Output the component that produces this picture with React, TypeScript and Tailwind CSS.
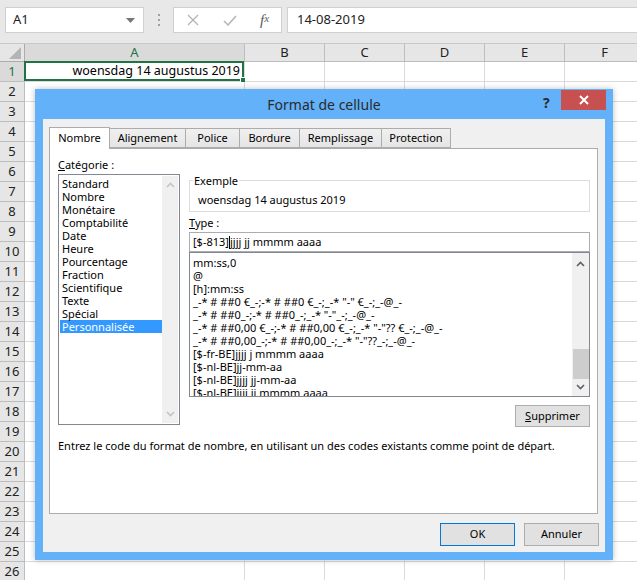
import React from "react";

const cols = [
  { id: "A", w: "w-[220px]" },
  { id: "B", w: "w-[80px]" },
  { id: "C", w: "w-[80px]" },
  { id: "D", w: "w-[80px]" },
  { id: "E", w: "w-[80px]" },
  { id: "F", w: "w-[80px]" },
];

const categories = [
  "Standard",
  "Nombre",
  "Monétaire",
  "Comptabilité",
  "Date",
  "Heure",
  "Pourcentage",
  "Fraction",
  "Scientifique",
  "Texte",
  "Spécial",
  "Personnalisée",
];

const formats = [
  "mm:ss,0",
  "@",
  "[h]:mm:ss",
  '_-* # ##0 €_-;-* # ##0 €_-;_-* "-" €_-;_-@_-',
  '_-* # ##0_-;-* # ##0_-;_-* "-"_-;_-@_-',
  '_-* # ##0,00 €_-;-* # ##0,00 €_-;_-* "-"?? €_-;_-@_-',
  '_-* # ##0,00_-;-* # ##0,00_-;_-* "-"??_-;_-@_-',
  "[$-fr-BE]jjjj j mmmm aaaa",
  "[$-nl-BE]jj-mm-aa",
  "[$-nl-BE]jjjj jj-mm-aa",
  "[$-nl-BE]jjjj jj mmmm aaaa",
];

const tabs = [
  { label: "Nombre", w: "w-[61px]", active: true },
  { label: "Alignement", w: "w-[77px]" },
  { label: "Police", w: "w-[55px]" },
  { label: "Bordure", w: "w-[61px]" },
  { label: "Remplissage", w: "w-[83px]" },
  { label: "Protection", w: "w-[70px]" },
];

const Chevron = ({ down, color }: { down?: boolean; color: string }) => (
  <svg width="9" height="6" viewBox="0 0 9 6">
    <path
      d={down ? "M1 1 L4.5 4.5 L8 1" : "M1 5 L4.5 1.5 L8 5"}
      fill="none"
      stroke={color}
      strokeWidth="1.6"
    />
  </svg>
);

const FormulaBar = () => (
  <div className="h-[43px] bg-[#e8e8e8] flex items-start pt-[7px] pl-[5px]">
    <div className="w-[139px] shrink-0 h-[26px] bg-white border border-[#d0d0d0] flex items-center justify-between pl-[7px] pr-[8px]">
      <span className="text-[13px] text-[#222]">A1</span>
      <svg width="9" height="5" viewBox="0 0 9 5">
        <path d="M0 0 L9 0 L4.5 5 Z" fill="#777" />
      </svg>
    </div>
    <div className="w-[29px] shrink-0 h-[26px] flex flex-col items-center justify-center gap-[3px]">
      <span className="w-[2px] h-[2px] bg-[#a0a0a0]" />
      <span className="w-[2px] h-[2px] bg-[#a0a0a0]" />
      <span className="w-[2px] h-[2px] bg-[#a0a0a0]" />
    </div>
    <div className="w-[109px] shrink-0 h-[26px] bg-white border border-[#d0d0d0] flex items-center">
      <span className="w-[37px] flex justify-center">
        <svg width="12" height="12" viewBox="0 0 12 12">
          <path d="M1 1 L11 11 M11 1 L1 11" stroke="#b4b4b4" strokeWidth="1.3" />
        </svg>
      </span>
      <span className="w-[37px] flex justify-center">
        <svg width="14" height="11" viewBox="0 0 14 11">
          <path d="M1 6 L5 10 L13 1" fill="none" stroke="#b4b4b4" strokeWidth="1.5" />
        </svg>
      </span>
      <span className="w-[33px] flex justify-center font-['Liberation_Serif',serif] italic text-[15px] text-[#5a5a5a] leading-none">
        f<span className="text-[11px]">x</span>
      </span>
    </div>
    <div className="ml-[5px] flex-1 h-[26px] bg-white border border-[#d0d0d0] border-r-0 flex items-center pl-[9px]">
      <span className="text-[13px] text-[#222]">14-08-2019</span>
    </div>
  </div>
);

const Sheet = () => (
  <div>
    <div className="flex h-[19px] border-t border-[#c8c8c8]">
      <div className="w-[25px] shrink-0 h-full bg-[#e6e6e6] border-r border-b border-[#ababab] flex items-end justify-end pr-[3px] pb-[2px]">
        <svg width="12" height="12" viewBox="0 0 12 12">
          <path d="M12 0 L12 12 L0 12 Z" fill="#b4b4b4" />
        </svg>
      </div>
      {cols.map((c) => (
        <div
          key={c.id}
          className={`${c.w} shrink-0 h-full border-r border-b border-[#bdbdbd] flex items-center justify-center text-[13px] ${
            c.id === "A" ? "text-[#217346] bg-[#dadada] border-b-[#ababab]" : "text-[#222] bg-[#e6e6e6]"
          }`}
        >
          {c.id}
        </div>
      ))}
    </div>
    {Array.from({ length: 26 }, (_, i) => i + 1).map((r) => (
      <div key={r} className="flex h-[20px]">
        <div
          className={`w-[25px] shrink-0 h-full border-r border-b border-[#bdbdbd] flex items-center justify-center text-[13px] ${
            r === 1 ? "text-[#217346] bg-[#dadada]" : "text-[#222] bg-[#e6e6e6]"
          }`}
        >
          {r}
        </div>
        {cols.map((c) => (
          <div
            key={c.id}
            className={`${c.w} shrink-0 h-full border-r border-b border-[#dadada] relative`}
          >
            {r === 1 && c.id === "A" && (
              <div className="absolute left-[-1px] top-[-1px] right-0 bottom-0 border-2 border-[#217346] flex items-center justify-end pr-[2px] text-[12.5px] text-black">
                woensdag 14 augustus 2019
                <span className="absolute right-[-4px] bottom-[-4px] w-[6px] h-[6px] bg-[#217346] border border-white" />
              </div>
            )}
          </div>
        ))}
      </div>
    ))}
  </div>
);

const Dialog = () => (
  <div className="absolute left-[35px] top-[89px] w-[578px] h-[471px] bg-[#62b1f9] shadow-[0_0_6px_rgba(0,0,0,0.25)] flex flex-col text-[11px] text-black">
    <div className="h-[30px] shrink-0 relative flex items-center justify-center">
      <span className="text-[14px] text-[#2b2b2b] mt-[1px]">Format de cellule</span>
      <span className="absolute left-[508px] top-[3px] text-[14px] font-bold text-[#2b2b2b]">?</span>
      <div className="absolute left-[526px] top-[1px] w-[45px] h-[20px] bg-[#c75050] flex items-center justify-center">
        <svg width="10" height="10" viewBox="0 0 10 10">
          <path d="M1 1 L9 9 M9 1 L1 9" stroke="white" strokeWidth="2" />
        </svg>
      </div>
    </div>
    <div className="mx-[8px] mb-[8px] flex-1 bg-[#f0f0f0] pl-[6px] pt-[8px] flex flex-col">
      <div className="h-[21px] flex items-end relative z-10">
        {tabs.map((t, i) => (
          <div
            key={t.label}
            className={`${t.w} shrink-0 flex items-center justify-center border border-[#acacac] ${
              i > 0 ? "-ml-px" : ""
            } ${
              t.active
                ? "h-[22px] mb-[-1px] bg-white border-b-0 z-10"
                : "h-[20px] bg-gradient-to-b from-[#f0f0f0] to-[#e5e5e5]"
            }`}
          >
            {t.label}
          </div>
        ))}
      </div>
      <div className="w-[549px] h-[366px] bg-white border border-[#acacac] pl-[8px] pt-[8px] flex flex-col">
        <div className="flex gap-[9px]">
          <div className="w-[122px] shrink-0 flex flex-col">
            <div className="h-[15px] leading-[15px]">
              <span className="underline">C</span>atégorie :
            </div>
            <div className="mt-[2px] h-[251px] border border-[#828790] flex p-px">
              <div className="flex-1 pt-[1px]">
                {categories.map((c) => (
                  <div
                    key={c}
                    className={`h-[13px] leading-[13px] pl-[2px] ${
                      c === "Personnalisée" ? "bg-[#3399ff] text-white" : ""
                    }`}
                  >
                    {c}
                  </div>
                ))}
              </div>
              <div className="w-[16px] bg-[#f0f0f0] flex flex-col items-center justify-between py-[6px]">
                <Chevron color="#c4c4c4" />
                <Chevron down color="#c4c4c4" />
              </div>
            </div>
          </div>
          <div className="w-[401px] shrink-0 mt-[16px] flex flex-col">
            <fieldset className="border border-[#dcdcdc] px-[8px] pb-[4px]">
              <legend className="ml-[-5px] px-[1px] leading-[15px]">Exemple</legend>
              <div className="pt-[4px] leading-[15px]">woensdag 14 augustus 2019</div>
            </fieldset>
            <div className="mt-[3px] h-[15px] leading-[15px]">
              <span className="underline">T</span>ype :
            </div>
            <div className="mt-[2px] h-[20px] border border-[#abadb3] flex items-center pl-[3px] whitespace-pre">
              [$-813]
              <span className="inline-block w-px h-[13px] bg-black" />
              jjjj jj mmmm aaaa
            </div>
            <div className="h-[145px] border border-[#828790] flex overflow-hidden">
              <div className="flex-1 pl-[3px] pt-[3px] overflow-hidden">
                {formats.map((f) => (
                  <div key={f} className="h-[13px] leading-[13px] whitespace-pre">
                    {f}
                  </div>
                ))}
              </div>
              <div className="w-[17px] bg-[#f0f0f0] flex flex-col items-center">
                <div className="h-[17px] flex items-center justify-center mt-[2px]">
                  <Chevron color="#606060" />
                </div>
                <div className="flex-1" />
                <div className="w-[16px] h-[30px] bg-[#cdcdcd]" />
                <div className="h-[16px] flex items-center justify-center mb-[1px]">
                  <Chevron down color="#606060" />
                </div>
              </div>
            </div>
            <div className="mt-[8px] self-end w-[75px] h-[22px] border border-[#adadad] bg-[#e1e1e1] flex items-center justify-center">
              <span>
                <span className="underline">S</span>upprimer
              </span>
            </div>
          </div>
        </div>
        <div className="mt-[11px] leading-[15px]">
          Entrez le code du format de nombre, en utilisant un des codes existants comme point de départ.
        </div>
      </div>
      <div className="mt-[9px] flex gap-[9px] pl-[391px]">
        <div className="w-[75px] h-[23px] border border-[#0078d7] bg-[#e1e1e1] flex items-center justify-center">
          OK
        </div>
        <div className="w-[75px] h-[23px] border border-[#adadad] bg-[#e1e1e1] flex items-center justify-center">
          Annuler
        </div>
      </div>
    </div>
  </div>
);

export default function App() {
  return (
    <div className="w-[637px] h-[580px] overflow-hidden relative bg-white font-['Noto_Sans',sans-serif]">
      <FormulaBar />
      <Sheet />
      <Dialog />
    </div>
  );
}
